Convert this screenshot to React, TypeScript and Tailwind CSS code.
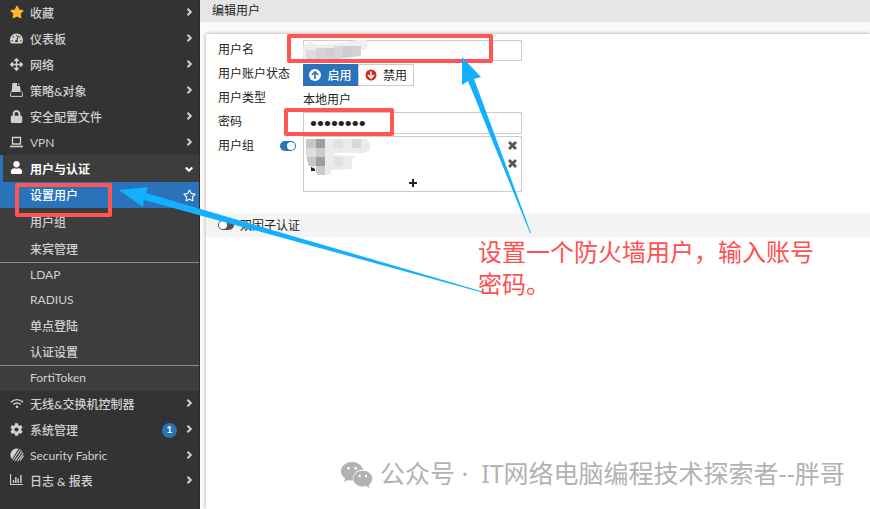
import type { ReactNode } from "react"
import clsx from "clsx"
import { FaArrowsAlt, FaCog, FaLock, FaStar, FaTachometerAlt, FaUser, FaRegStar } from "react-icons/fa"

type NavItem = {
  label: string
  icon: ReactNode
  latin?: boolean
  badge?: number
}

function LaptopIcon() {
  return (
    <svg viewBox="0 0 13 12" className="h-3 w-[13px]" fill="none" stroke="currentColor" aria-hidden>
      <path d="M2.5 1.5h8v6.5h-8z" strokeWidth="1.3" />
      <path d="M0 10.5h13" strokeWidth="1.6" />
    </svg>
  )
}

function PolicyIcon() {
  return (
    <svg viewBox="0 0 13 14" className="h-3.5 w-[13px]" fill="currentColor" aria-hidden>
      <path d="M2.500 0H7v3h3l.8 6H1.500z" />
      <path d="M8 0l2 2H8z" />
      <path d="M1.500 8.500L.6 10v3.400h11.800V10l-.9-1.500" fill="none" stroke="currentColor" />
      <path d="M.6 10.500h11.800" stroke="#333" />
    </svg>
  )
}

function WifiIcon() {
  return (
    <svg viewBox="0 0 14 11" className="h-[11px] w-3.5" fill="none" stroke="currentColor" strokeWidth="1.4" aria-hidden>
      <path d="M1 4.200C4.400.7 9.600.7 13 4.200" />
      <path d="M3.300 6.600c2.100-2.200 5.300-2.200 7.400 0" />
      <circle cx="7" cy="8.800" r="1.300" fill="currentColor" stroke="none" />
    </svg>
  )
}

function FabricIcon() {
  return (
    <svg viewBox="0 0 14 14" className="size-3.5" aria-hidden>
      <path d="M8.500.7A6.500 6.500 0 0 0 2 11.200z" fill="currentColor" />
      <path d="M3 12.200L10.200 1.300M5.200 13L12 2.800M7.600 13.200L13.200 4.900M10.300 12.400L13.500 7.600" stroke="currentColor" strokeWidth="1.100" />
    </svg>
  )
}

function ReportIcon() {
  return (
    <svg viewBox="0 0 13 12" className="h-3 w-[13px]" fill="none" stroke="currentColor" aria-hidden>
      <path d="M.5 0v10.500H13" strokeWidth="1.200" />
      <path d="M3.500 6v3M5.800 3v6M8.100 4.500v4.500M10.900 1v8" strokeWidth="1.400" />
    </svg>
  )
}

function Chevron({ down = false }: { down?: boolean }) {
  return (
    <svg viewBox="0 0 8 8" className="size-2" fill="none" stroke="currentColor" strokeWidth="2" aria-hidden>
      <path d={down ? "M.7 2.500L4 5.800l3.300-3.300" : "M2.500.7L5.800 4 2.500 7.300"} />
    </svg>
  )
}

function CrossIcon() {
  return (
    <svg viewBox="0 0 9 9" className="size-[9px]" stroke="currentColor" strokeWidth="2.800" aria-hidden>
      <path d="M1 1l7 7M8 1L1 8" />
    </svg>
  )
}

function WechatIcon() {
  return (
    <svg viewBox="0 0 32 26" className="h-[26px] w-8" fill="#b2b2b2" aria-hidden>
      <path d="M11 0C5 0 0 4 0 9.200c0 3 1.600 5.400 4 7.100L3.200 20l3.900-2c1.300.4 2.500.5 3.900.5h1C10.800 12.500 15.500 7.600 22 7.700 21 3.200 16.400 0 11 0z" />
      <path d="M21.800 8.800c-5.300 0-9.500 3.500-9.500 7.900s4.200 7.900 9.500 7.900c1.100 0 2.200-.2 3.200-.5l3.400 1.900-.8-3.100c2.300-1.500 3.700-3.700 3.700-6.200 0-4.400-4.300-7.900-9.500-7.900z" />
      <g fill="#fff">
        <circle cx="7.400" cy="6.300" r="1.400" />
        <circle cx="14.800" cy="6.300" r="1.400" />
        <circle cx="18.700" cy="14" r="1.200" />
        <circle cx="25" cy="14" r="1.200" />
      </g>
    </svg>
  )
}

const topItems: NavItem[] = [
  { label: "收藏", icon: <FaStar size={14} className="text-[#fbb829]" /> },
  { label: "仪表板", icon: <FaTachometerAlt size={13} /> },
  { label: "网络", icon: <FaArrowsAlt size={13} /> },
  { label: "策略&对象", icon: <PolicyIcon /> },
  { label: "安全配置文件", icon: <FaLock size={13} /> },
  { label: "VPN", icon: <LaptopIcon />, latin: true },
]

const bottomItems: NavItem[] = [
  { label: "无线&交换机控制器", icon: <WifiIcon /> },
  { label: "系统管理", icon: <FaCog size={13} />, badge: 1 },
  { label: "Security Fabric", icon: <FabricIcon />, latin: true },
  { label: "日志 & 报表", icon: <ReportIcon /> },
]

const serverItems = [
  { label: "LDAP", latin: true },
  { label: "RADIUS", latin: true },
  { label: "单点登陆", latin: false },
  { label: "认证设置", latin: false },
]

function NavRow({ label, icon, latin, badge }: NavItem) {
  return (
    <a href="#" className={clsx("flex items-center pr-1.5 pl-2.5", latin ? "h-[25px]" : "h-[26px]")}>
      <span className="flex w-5 shrink-0 items-center pb-0.5">{icon}</span>
      <span className={clsx("flex-1", latin ? "font-normal" : "pt-0.5")}>{label}</span>
      {badge && (
        <span className="mr-2 flex size-[15px] items-center justify-center rounded-full bg-[#2a73ba] text-[10px] font-bold text-white">
          {badge}
        </span>
      )}
      <span className="pb-0.5"><Chevron /></span>
    </a>
  )
}

function Sidebar() {
  return (
    <nav className="w-[200px] shrink-0 border-r border-[#2b2b2b] bg-[#333] font-medium text-[#d0d0d0]">
      {topItems.map((item) => (
        <NavRow key={item.label} {...item} />
      ))}

      <div className="bg-[#3d3d3d]">
        <a href="#" className="flex h-[27px] items-center border-l-3 border-[#2a73ba] pr-1.5 pl-[7px] font-bold text-white">
          <span className="flex w-5 shrink-0 pb-0.5"><FaUser size={13} /></span>
          <span className="flex-1 pt-0.5">用户与认证</span>
          <Chevron down />
        </a>
        <div className="flex flex-col gap-px border-b border-[#8c8c8c]">
          <a href="#" className="flex h-[26px] items-center justify-between bg-[#2a73ba] pr-[3px] pl-[30px] text-white">
            <span className="pt-0.5">设置用户</span>
            <FaRegStar size={13} />
          </a>
          <a href="#" className="flex h-[26px] items-center pt-0.5 pl-[30px]">用户组</a>
          <a href="#" className="flex h-[26px] items-center pt-0.5 pl-[30px]">来宾管理</a>
        </div>
        <div className="border-b border-[#8c8c8c]">
          {serverItems.map(({ label, latin }) => (
            <a
              key={label}
              href="#"
              className={clsx("flex items-center pl-[30px]", latin ? "h-[25px] pb-0.5 font-normal" : "h-[26px] pt-0.5")}
            >
              {label}
            </a>
          ))}
        </div>
        <a href="#" className="flex h-[25px] items-center pb-0.5 pl-[30px] font-normal">FortiToken</a>
      </div>

      {bottomItems.map((item) => (
        <NavRow key={item.label} {...item} />
      ))}
    </nav>
  )
}

const toggleClass =
  "flex h-2.5 w-4 shrink-0 appearance-none rounded-full bg-[#555] p-px before:block before:size-2 before:rounded-full before:bg-white checked:justify-end checked:bg-[#2a73ba]"

const rowClass = "grid min-h-6 grid-cols-[85px_minmax(0,219px)] items-center"

/* Pixelated smudge over the account name */
function NameMask() {
  return (
    <svg viewBox="0 0 66 20" className="absolute top-0 left-0 h-5 w-[66px]" aria-hidden>
      <clipPath id="name-mask">
        <path d="M0 7Q3 2 9 2l5 3 24-2L54 0h9l3 5-4 5h-4v6l-18 2-2 2H3V18H0z" />
      </clipPath>
      <g clipPath="url(#name-mask)">
        <path fill="#eee" d="M0 0h66v20H0z" />
        <path fill="#dcdcdd" d="M3 10h10v8H3z" />
        <path fill="#d5d4d4" d="M13 8h9v10h-9z" />
        <path fill="#cfcfd1" d="M22 8h9v10h-9z" />
        <path fill="#d6d7d8" d="M31 6h9v12h-9z" />
        <path fill="#cccdcf" d="M40 6h9v12h-9z" />
        <path fill="#d2d3d5" d="M49 6h9v12h-9z" />
        <path fill="#c3dcef" d="M3 18h35v2H3z" />
      </g>
    </svg>
  )
}

/* Pixelated smudge over the group names */
function GroupMask() {
  return (
    <svg viewBox="0 0 66 38" className="h-[38px] w-[66px] shrink-0" aria-hidden>
      <clipPath id="group-mask">
        <path d="M0 0h60l4 3v8l-6 3H30l-3 2 22 1-3 3v10l-20 1-3 5H12l-3-5-6-3-3-12z" />
      </clipPath>
      <g clipPath="url(#group-mask)">
        <path fill="#ebebeb" d="M0 0h66v38H0z" />
        <path fill="#cbc4c1" d="M0 0h10v9H0zM0 18h10v9H0z" />
        <path fill="#999fa8" d="M10 0h9v9h-9zM10 18h9v9h-9z" />
        <path fill="#dedddd" d="M0 9h10v9H0z" />
        <path fill="#c9cbce" d="M10 9h9v9h-9zM10 27h9v9h-9z" />
        <path fill="#e0e2e2" d="M28 0h9v9h-9zM28 18h9v9h-9z" />
        <path fill="#d6d8da" d="M46 0h9v9h-9z" />
      </g>
      <path fill="#222" d="M5 28l4 2v2H5z" />
    </svg>
  )
}

function UserForm() {
  return (
    <form className="flex-1 bg-white pt-1 shadow-[0_0_4px_rgba(0,0,0,0.35)]">
      <div className="pl-3">
        <div className={rowClass}>
          <label htmlFor="username">用户名</label>
          <div className="relative flex">
            <input id="username" className="h-[21px] w-full border border-[#ccc] bg-white px-2 outline-none" />
            <NameMask />
          </div>
        </div>
        <div className={rowClass}>
          <span>用户账户状态</span>
          <div className="flex h-[22px] self-end">
            <button type="button" aria-pressed="true" className="flex w-[55px] items-center justify-center gap-1.5 bg-[#2a73ba] font-medium text-white">
              <svg viewBox="0 0 12 12" className="size-3" aria-hidden>
                <circle cx="6" cy="6" r="6" fill="#fff" />
                <path d="M6 10V3M2.800 6L6 2.800 9.200 6" fill="none" stroke="#2a73ba" strokeWidth="1.600" />
              </svg>
              <span className="pt-0.5">启用</span>
            </button>
            <button type="button" aria-pressed="false" className="flex w-14 items-center justify-center gap-1.5 border border-[#ccc] bg-white">
              <svg viewBox="0 0 12 12" className="size-3" aria-hidden>
                <circle cx="6" cy="6" r="5.500" fill="#d42b1e" />
                <path d="M6 2.500v6.500M3 6l3 3 3-3" fill="none" stroke="#fff" strokeWidth="1.600" />
              </svg>
              <span className="pt-0.5">禁用</span>
            </button>
          </div>
        </div>
        <div className={rowClass}>
          <span>用户类型</span>
          <span className="pt-1">本地用户</span>
        </div>
        <div className={rowClass}>
          <label htmlFor="password">密码</label>
          <input
            id="password"
            type="password"
            defaultValue="password"
            className="h-[22px] w-full self-end border border-[#ccc] bg-white px-1.5 pb-0.5 font-bold outline-none"
          />
        </div>
        <div className="grid grid-cols-[85px_minmax(0,219px)] items-start">
          <label className="flex h-6 items-center justify-between pr-[7px]">
            用户组
            <input type="checkbox" defaultChecked className={toggleClass} />
          </label>
          <div className="mt-0.5 flex h-14 flex-col justify-between border border-[#ccc]">
            <div className="flex justify-between pt-0.5 pr-1 pl-0.5">
              <GroupMask />
              <div className="flex flex-col gap-[9px] pt-0.5 text-[#555]">
                <button type="button" aria-label="移除第一个用户组"><CrossIcon /></button>
                <button type="button" aria-label="移除第二个用户组"><CrossIcon /></button>
              </div>
            </div>
            <button type="button" aria-label="添加用户组" className="mx-auto mb-1">
              <svg viewBox="0 0 8 8" className="size-2" stroke="#222" strokeWidth="2" aria-hidden>
                <path d="M4 0v8M0 4h8" />
              </svg>
            </button>
          </div>
        </div>
      </div>

      <label className="mt-[21px] flex h-6 items-center gap-1.5 bg-[#f4f4f4] pl-3">
        <input type="checkbox" className={toggleClass} />
        <span className="pt-0.5">双因子认证</span>
      </label>
    </form>
  )
}

function Annotations() {
  return (
    <div className="pointer-events-none absolute inset-0 overflow-hidden">
      <svg width="870" height="509" viewBox="0 0 870 509" className="absolute top-0 left-0" aria-hidden>
        <g fill="none" stroke="#ff5555" strokeWidth="4" strokeLinejoin="round">
          <path d="M289 36h202v25H289z" />
          <path d="M286 110h106v24H286z" />
          <path d="M17 185h93v30H17z" />
        </g>
        <g fill="#13b0ff">
          <path d="M462 57l19 20-7 2 57 154h-1L468 81l-6 4z" />
          <path d="M119 190l29-3-2 6 338 99v1L144 200l-1 7z" />
        </g>
      </svg>
      <p className="absolute top-[236px] left-[478px] w-[340px] text-2xl leading-8 text-[#ff5050]">
        设置一个防火墙用户，输入账号密码。
      </p>
      <div className="absolute top-[457px] left-[341px] flex items-center gap-[7px] font-['Noto_Sans','Noto_Sans_CJK_SC',sans-serif] text-[25px] leading-8 whitespace-pre text-[#b2b2b2]">
        <WechatIcon />
        <span className="pb-1">公众号 ·  IT网络电脑编程技术探索者--胖哥</span>
      </div>
    </div>
  )
}

export default function App() {
  return (
    <div className="relative flex min-h-screen bg-[#fafafa] font-['Lato','Noto_Sans_CJK_SC',sans-serif] text-xs text-[#222]">
      <Sidebar />
      <main className="flex min-w-0 flex-1 flex-col">
        <h1 className="flex h-[22px] items-center bg-[#e6e6e6] pl-3">编辑用户</h1>
        <div className="flex flex-1 flex-col pt-3 pl-1.5">
          <UserForm />
        </div>
      </main>
      <Annotations />
    </div>
  )
}
